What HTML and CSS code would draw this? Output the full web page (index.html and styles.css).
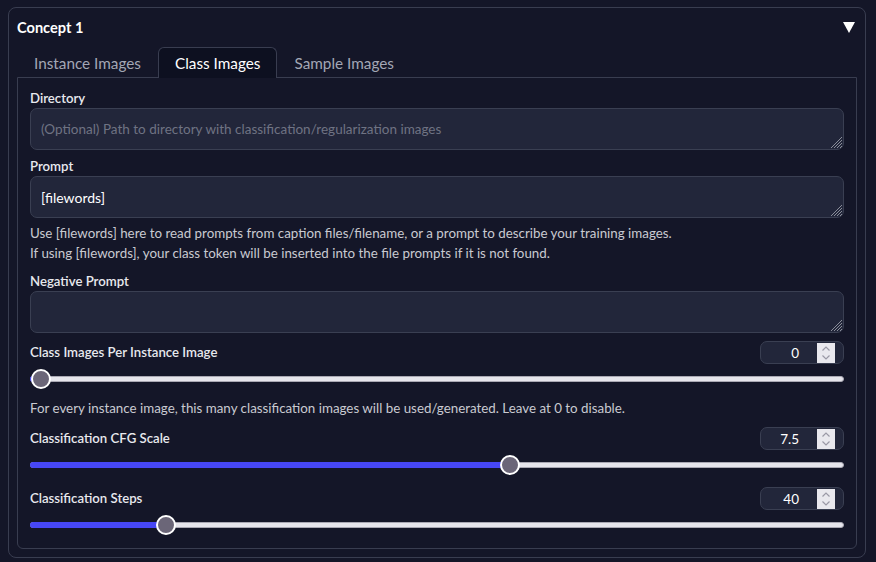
FILE: index.html
```html
<!DOCTYPE html>
<html>
<head>
<meta charset="utf-8">
<link rel="stylesheet" href="styles.css">
</head>
<body>
<div class="panel">
  <div class="panel-head">
    <span class="panel-title">Concept 1</span>
    <svg class="caret" width="12" height="11" viewBox="0 0 12 11"><polygon points="0,0 12,0 6,11" fill="#ffffff"/></svg>
  </div>
  <div class="tabs">
    <div class="tab">Instance Images</div>
    <div class="tab active">Class Images</div>
    <div class="tab">Sample Images</div>
  </div>
  <div class="tab-body">
    <div class="field">
      <div class="label">Directory</div>
      <div class="textbox"><span class="placeholder">(Optional) Path to directory with classification/regularization images</span>
        <svg class="grip" width="12" height="12" viewBox="0 0 12 12"><path d="M12 1 L1 12 M12 4 L4 12 M12 7 L7 12 M12 10 L10 12" stroke="#8a8d99" stroke-width="1"/></svg>
      </div>
    </div>
    <div class="field">
      <div class="label">Prompt</div>
      <div class="textbox"><span class="value">[filewords]</span>
        <svg class="grip" width="12" height="12" viewBox="0 0 12 12"><path d="M12 1 L1 12 M12 4 L4 12 M12 7 L7 12 M12 10 L10 12" stroke="#8a8d99" stroke-width="1"/></svg>
      </div>
    </div>
    <div class="help">Use [filewords] here to read prompts from caption files/filename, or a prompt to describe your training images.<br>If using [filewords], your class token will be inserted into the file prompts if it is not found.</div>
    <div class="field gap-top">
      <div class="label">Negative Prompt</div>
      <div class="textbox">
        <svg class="grip" width="12" height="12" viewBox="0 0 12 12"><path d="M12 1 L1 12 M12 4 L4 12 M12 7 L7 12 M12 10 L10 12" stroke="#8a8d99" stroke-width="1"/></svg>
      </div>
    </div>

    <div class="slider-block gap-slider">
      <div class="slider-row">
        <span class="label">Class Images Per Instance Image</span>
        <div class="number"><span class="num">0</span><span class="spin"><svg width="10" height="16" viewBox="0 0 10 16"><path d="M1.5 5.5 L5 2 L8.5 5.5 M1.5 10.5 L5 14 L8.5 10.5" fill="none" stroke="#9a99a6" stroke-width="1.2"/></svg></span></div>
      </div>
      <div class="track-area">
        <div class="track"><div class="fill" style="width:10px"></div><div class="thumb" style="left:10px"></div></div>
      </div>
    </div>
    <div class="help single">For every instance image, this many classification images will be used/generated. Leave at 0 to disable.</div>

    <div class="slider-block gap-top">
      <div class="slider-row">
        <span class="label">Classification CFG Scale</span>
        <div class="number"><span class="num">7.5</span><span class="spin"><svg width="10" height="16" viewBox="0 0 10 16"><path d="M1.5 5.5 L5 2 L8.5 5.5 M1.5 10.5 L5 14 L8.5 10.5" fill="none" stroke="#9a99a6" stroke-width="1.2"/></svg></span></div>
      </div>
      <div class="track-area">
        <div class="track"><div class="fill" style="width:479px"></div><div class="thumb" style="left:479px"></div></div>
      </div>
    </div>

    <div class="slider-block gap-top">
      <div class="slider-row">
        <span class="label">Classification Steps</span>
        <div class="number"><span class="num">40</span><span class="spin"><svg width="10" height="16" viewBox="0 0 10 16"><path d="M1.5 5.5 L5 2 L8.5 5.5 M1.5 10.5 L5 14 L8.5 10.5" fill="none" stroke="#9a99a6" stroke-width="1.2"/></svg></span></div>
      </div>
      <div class="track-area">
        <div class="track"><div class="fill" style="width:135px"></div><div class="thumb" style="left:135px"></div></div>
      </div>
    </div>
  </div>
</div>
</body>
</html>
```
FILE: styles.css
```css
* { box-sizing: border-box; }
html, body {
  margin: 0;
  padding: 0;
  background: #141628;
  font-family: "Lato", "Noto Sans", sans-serif;
  color: #e5e7eb;
}
body { padding: 7px 10px 3px 8px; }
.panel {
  width: 858px;
  border: 1px solid #393d50;
  border-radius: 8px;
  padding: 0 8px 8px 8px;
  display: flex;
  flex-direction: column;
}
.panel-head {
  flex-shrink: 0;
  height: 39px;
  display: flex;
  align-items: center;
  justify-content: space-between;
  padding-right: 2px;
}
.panel-title {
  font-size: 14.6px;
  font-weight: 700;
  color: #ffffff;
}
.caret { display: block; }
.tabs {
  flex-shrink: 0;
  display: flex;
  height: 30px;
  position: relative;
  z-index: 1;
}
.tab {
  padding: 0 16px;
  line-height: 30px;
  font-size: 15.3px;
  color: #a3a7b5;
  border: 1px solid transparent;
  border-bottom: none;
  border-radius: 6px 6px 0 0;
}
.tab.active {
  color: #ffffff;
  background: #0d1020;
  border-color: #393d50;
  height: 31px;
}
.tab-body {
  border: 1px solid #393d50;
  border-radius: 0 0 6px 6px;
  padding: 11px 12px 10px 12px;
  display: flex;
  flex-direction: column;
}
.field { display: flex; flex-direction: column; }
.field + .field { margin-top: 7px; }
.gap-top { margin-top: 9px; }
.gap-slider { margin-top: 8px; }
.label {
  font-size: 13.2px;
  font-weight: 600;
  line-height: 19px;
  color: #e8e9ee;
}
.field .label { line-height: 20px; margin-top: -1px; }
.textbox {
  position: relative;
  height: 42px;
  background: #22263a;
  border: 1px solid #3a3f52;
  border-radius: 7px;
  padding: 0 10px;
  display: flex;
  align-items: center;
  font-size: 13.5px;
}
.placeholder { color: #6f7383; }
.value { color: #ffffff; font-size: 14px; }
.grip { position: absolute; right: 1px; bottom: 1px; }
.help {
  margin-top: 5px;
  font-size: 13.35px;
  line-height: 20px;
  color: #c9cad1;
}
.help.single { margin-top: 6px; }
.slider-block { display: flex; flex-direction: column; }
.slider-row {
  height: 23px;
  display: flex;
  align-items: center;
  justify-content: space-between;
}
.number {
  width: 84px;
  height: 23px;
  border: 1px solid #3a3f52;
  border-radius: 7px;
  background: #22263a;
  display: flex;
  align-items: center;
  justify-content: flex-end;
  padding-right: 8px;
}
.num {
  font-size: 13.5px;
  color: #ffffff;
  margin-right: 18px;
}
.spin {
  width: 18px;
  height: 20px;
  background: #e9e8ee;
  display: flex;
  align-items: center;
  justify-content: center;
}
.spin svg { display: block; }
.track-area {
  height: 28px;
  padding-top: 1px;
  display: flex;
  align-items: center;
}
.track {
  position: relative;
  width: 100%;
  height: 6px;
  background: #e6e5ec;
  border: 1px solid #a9a8b3;
  border-radius: 3px;
}
.fill {
  position: absolute;
  left: -1px;
  top: -1px;
  height: 6px;
  background: #4747f5;
  border-radius: 3px 0 0 3px;
}
.thumb {
  position: absolute;
  top: 50%;
  width: 20px;
  height: 20px;
  margin: -10px 0 0 -10px;
  background: #6b6678;
  border: 2px solid #ffffff;
  border-radius: 50%;
}
```
